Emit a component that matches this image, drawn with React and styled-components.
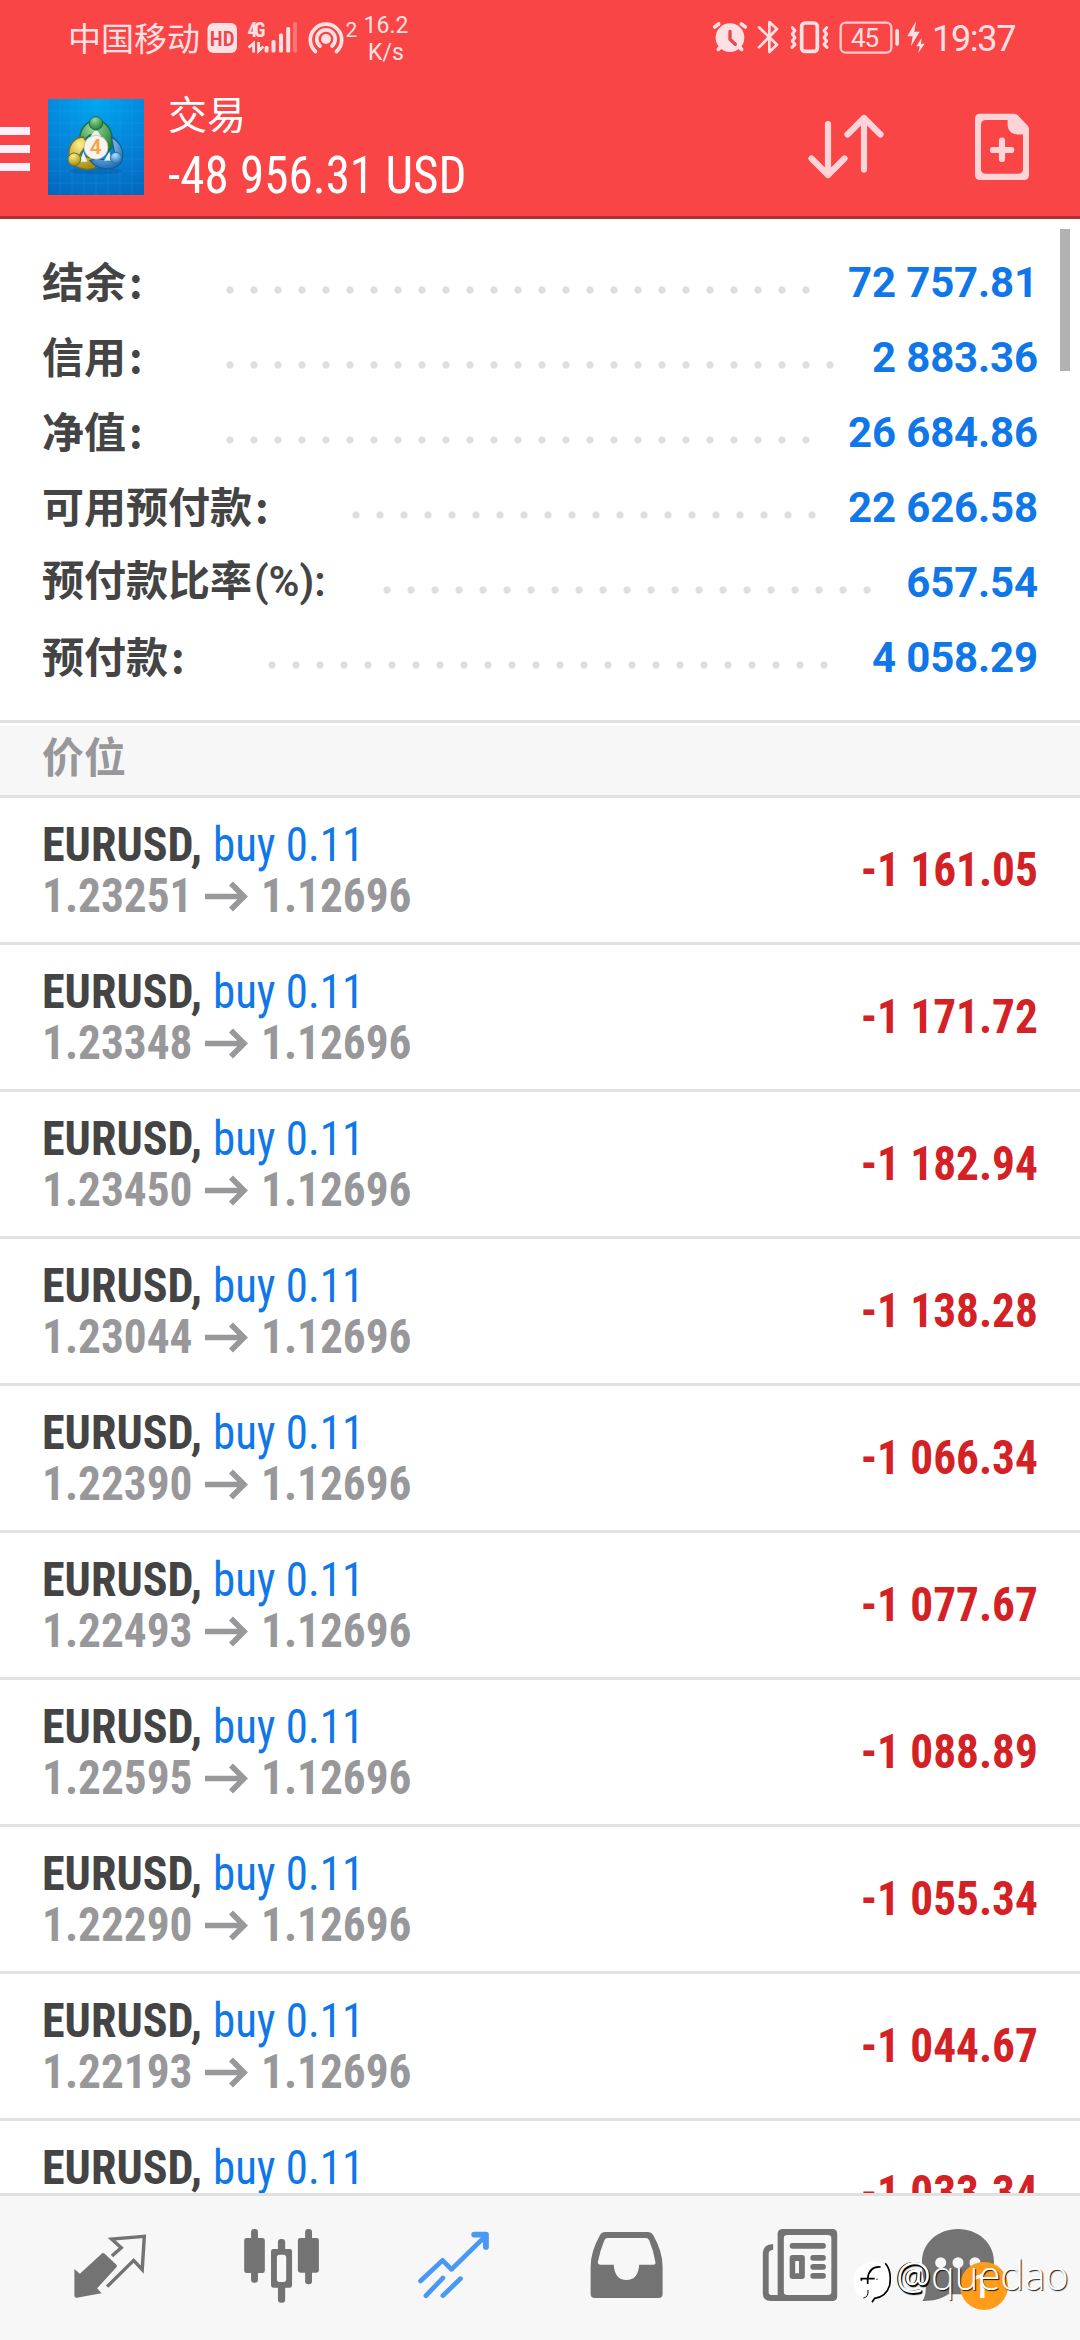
import React from "react";
import styled, { createGlobalStyle } from "styled-components";

const GlobalStyle = createGlobalStyle`
  * { box-sizing: border-box; }
  body { margin: 0; background: #fff; }
`;

const cjk = `"Noto Sans CJK SC", Roboto, sans-serif`;
const roboto = `Roboto, "Noto Sans CJK SC", sans-serif`;
const condensed = `"Roboto Condensed", Roboto, sans-serif`;

const Screen = styled.div`
  position: relative;
  width: 1080px;
  height: 2340px;
  overflow: hidden;
  display: flex;
  flex-direction: column;
  background: #fff;
  font-family: ${roboto};
`;

const Header = styled.header`
  flex: none;
  height: 219px;
  background: #fa4546;
  border-bottom: 3px solid #ae3033;
`;

const StatusBar = styled.div`
  display: flex;
  align-items: center;
  height: 78px;
  padding-left: 68px;
  color: #ffe1e3;
`;

const Carrier = styled.span`
  width: 136px;
  padding-bottom: 4px;
  font: 400 33px/40px ${cjk};
  white-space: nowrap;
`;

const Speed = styled.span`
  width: 52px;
  font-size: 23px;
  line-height: 27px;
  text-align: center;
`;

const Clock = styled.span`
  font-size: 36px;
  line-height: 40px;
  letter-spacing: -1.3px;
`;

const Glyph = styled.svg`
  flex: none;
  display: block;
  width: ${(p) => p.$w}px;
  height: ${(p) => p.$h}px;
  margin-left: ${(p) => p.$gap || 0}px;
  overflow: visible;
`;

const TitleBar = styled.div`
  display: flex;
  align-items: center;
  height: 138px;
`;

const MenuButton = styled.div`
  display: flex;
  flex-direction: column;
  gap: 10px;
  width: 30px;
  margin-top: 4px;
`;

const MenuLine = styled.span`
  height: 8px;
  background: #fbf0fb;
`;

const Titles = styled.div`
  display: flex;
  flex-direction: column;
  align-items: flex-start;
  gap: 8px;
  width: 662px;
  padding: 0 0 3px 24px;
  color: #fff;
`;

const Title = styled.span`
  font: 400 39px/52px ${cjk};
`;

const Narrow = styled.span`
  display: inline-block;
  transform: scaleX(${(p) => p.$x});
  transform-origin: ${(p) => p.$origin || "left"} center;
  white-space: nowrap;
`;

const Profit = styled(Narrow)`
  font: 400 51px/60px ${condensed};
`;

const Summary = styled.section`
  flex: none;
  height: 501px;
  padding: 24px 42px 0;
`;

const SummaryRow = styled.div`
  display: flex;
  align-items: center;
  height: 75px;
`;

const SummaryLabel = styled.span`
  flex: none;
  width: ${(p) => p.$w}px;
  padding-bottom: 2px;
  font: 700 42px/73px ${cjk};
  color: #444;
  white-space: nowrap;
`;

const Suffix = styled.span`
  margin-left: ${(p) => (p.$latin ? 2 : 3)}px;
  font-family: ${(p) => (p.$latin ? roboto : cjk)};
  font-weight: ${(p) => (p.$latin ? 600 : 700)};
`;

const Leader = styled.span`
  flex: none;
  width: ${(p) => p.$dots * 24}px;
  height: 75px;
  background: radial-gradient(circle at 12px 47px, #dedede 3.1px, transparent 4.1px) 0 0 / 24px 75px repeat-x;
`;

const SummaryValue = styled.span`
  margin-left: auto;
  padding-top: 4px;
  font-size: 42px;
  font-weight: 700;
  line-height: 60px;
  letter-spacing: -0.15px;
  color: #1077e8;
`;

const SectionHead = styled.div`
  flex: none;
  height: 78px;
  padding-left: 42px;
  border-top: 3px solid #e2e2e2;
  border-bottom: 3px solid #e2e2e2;
  background: linear-gradient(#fff 3px, #f7f7f8 3px);
  font: 700 42px/63px ${cjk};
  color: #98989b;
`;

const Orders = styled.main`
  flex: 1;
  min-height: 0;
  overflow: hidden;
`;

const Order = styled.div`
  display: flex;
  justify-content: space-between;
  height: 147px;
  padding: 21px 42px 0;
  border-bottom: 3px solid #e2e2e2;
  font: 700 48px/51px ${condensed};
  white-space: nowrap;
`;

const OrderInfo = styled.div`
  display: flex;
  flex-direction: column;
`;

const OrderLine = styled.div`
  display: flex;
  align-items: center;
  height: 51px;
`;

const Symbol = styled(Narrow)`
  width: 171px;
  color: #444;
`;

const Side = styled(Narrow)`
  font-weight: 400;
  color: #1077e8;
`;

const OpenPrice = styled(Narrow)`
  width: 163px;
  color: #98989a;
`;

const ClosePrice = styled(Narrow)`
  margin-left: 14px;
  color: #98989a;
`;

const OrderProfit = styled(Narrow)`
  height: 102px;
  line-height: 102px;
  color: #d32125;
`;

const NavBar = styled.nav`
  flex: none;
  display: flex;
  height: 147px;
  padding-left: 24px;
  border-top: 3px solid #e0e0e1;
  background: #f7f7f8;
`;

const NavItem = styled.div`
  flex: none;
  display: flex;
  width: 172px;
`;

const ScrollThumb = styled.div`
  position: absolute;
  top: 229px;
  left: 1060px;
  width: 10px;
  height: 142px;
  background: #b2b2b2;
`;

const Watermark = styled.div`
  position: absolute;
  top: 2254px;
  left: 850px;
  display: flex;
  align-items: center;
  height: 52px;
  color: #fff;
  font: 300 40px/42px "Open Sans", sans-serif;
  text-shadow: 1px 1px 1px rgba(0, 0, 0, 0.9);
`;

const WatermarkName = styled.span`
  padding-bottom: 10px;
`;

const WatermarkAt = styled(WatermarkName)`
  margin-left: 3px;
  font-weight: 400;
  font-size: 39px;
  text-shadow: 1px 1px 0 #000, -1px 0 0 #000, 1px 2px 1px #000;
`;

const summary = [
  { label: "结余", suffix: ":", w: 176, dots: 25, value: "72 757.81" },
  { label: "信用", suffix: ":", w: 176, dots: 26, value: "2 883.36" },
  { label: "净值", suffix: ":", w: 176, dots: 25, value: "26 684.86" },
  { label: "可用预付款", suffix: ":", w: 302, dots: 20, value: "22 626.58" },
  { label: "预付款比率", suffix: "(%):", w: 333, dots: 21, value: "657.54" },
  { label: "预付款", suffix: ":", w: 218, dots: 24, value: "4 058.29" },
];

const orders = [
  ["1.23251", "-1 161.05"],
  ["1.23348", "-1 171.72"],
  ["1.23450", "-1 182.94"],
  ["1.23044", "-1 138.28"],
  ["1.22390", "-1 066.34"],
  ["1.22493", "-1 077.67"],
  ["1.22595", "-1 088.89"],
  ["1.22290", "-1 055.34"],
  ["1.22193", "-1 044.67"],
  ["1.22089", "-1 033.34"],
];

const SignalIcons = () => (
  <Glyph $w={156} $h={78} viewBox="204 0 156 78" fill="#ffe1e3">
    <rect x="207.5" y="23" width="29.5" height="30" rx="6" />
    <text x="222.2" y="46" fontSize="21" fontWeight="600" textAnchor="middle" fill="#e8484c" fontFamily="Roboto Condensed, sans-serif">HD</text>
    <text x="247.5" y="36.5" fontSize="19.5" fontWeight="700" textLength="18" fontFamily="Roboto Condensed, sans-serif">4G</text>
    <g fill="none" stroke="#ffe1e3" strokeWidth="2.8">
      <path d="M248.5 47.5 L253.6 43.5 V52.5" />
      <path d="M258.6 42 V51 L263.4 46.5" />
    </g>
    <rect x="264.6" y="46" width="4" height="6.5" rx="1.5" />
    <rect x="271.5" y="40" width="4" height="12.5" rx="1.5" />
    <rect x="279" y="33.5" width="4" height="19" rx="1.5" />
    <rect x="286.2" y="27" width="4" height="25.5" rx="1.5" />
    <rect x="293" y="22" width="4" height="30.5" rx="1.5" opacity="0.3" />
    <circle cx="326" cy="39" r="5" />
    <g fill="none" stroke="#ffe1e3" strokeWidth="3.7" strokeLinecap="round">
      <path d="M320 46 A9.2 9.2 0 1 1 332 46" />
      <path d="M315.5 51.5 A15.7 15.7 0 1 1 336.5 51.5" />
    </g>
    <text x="345.5" y="37" fontSize="21" fontFamily="Roboto, sans-serif">2</text>
  </Glyph>
);

const SystemIcons = () => (
  <Glyph $w={223} $h={78} $gap={297} viewBox="708 0 223 78">
    <g transform="translate(690 10) scale(.33333)" fill="#ffe1e3" stroke="#ffe1e3">
      <circle cx="117" cy="83" r="43" stroke="none" />
      <g fill="none" strokeWidth="11" strokeLinecap="round">
        <path d="M71 51 L83 42 M163 51 L151 42 M82 118 L90 110 M152 118 L144 110" />
        <path d="M117 64 V88 L133 103" stroke="#e8484c" strokeWidth="10" />
        <path d="M204 52 L258 104 L235 126 V36 L258 57 L204 112" strokeWidth="8" strokeLinejoin="round" />
        <path d="M304 53 L312 62 L304 72 L312 83 L304 93 L312 103 L303 112" strokeWidth="9" strokeLinejoin="round" />
        <path d="M407 53 L399 62 L407 72 L399 83 L407 93 L399 103 L408 112" strokeWidth="9" strokeLinejoin="round" />
      </g>
      <rect x="332" y="39" width="47" height="85" rx="10" fill="none" strokeWidth="11" />
      <rect x="449" y="38" width="152" height="90" rx="15" fill="none" strokeWidth="7" stroke="#ffc9cb" />
      <rect x="613" y="57" width="11" height="50" rx="5" stroke="none" />
      <text x="522" y="110" fontSize="78" textLength="84" textAnchor="middle" fontFamily="Roboto, sans-serif" stroke="none">45</text>
      <path stroke="none" d="M675 34 L649 79 H665 L660 109 L686 65 H670 Z M692 83 L676 109 H686 L682 129 L701 101 H690 Z" />
    </g>
  </Glyph>
);

const AppLogo = () => (
  <Glyph $w={96} $h={96} $gap={18} viewBox="24 27 288 288">
    <defs>
      <radialGradient id="sky" cx="50%" cy="0%" r="110%">
        <stop offset="0" stopColor="#00a8f0" />
        <stop offset="0.55" stopColor="#0583d8" />
        <stop offset="1" stopColor="#0466bd" />
      </radialGradient>
      <radialGradient id="green" cx="40%" cy="25%" r="75%">
        <stop offset="0" stopColor="#9bd89a" /><stop offset="1" stopColor="#1f7f35" />
      </radialGradient>
      <radialGradient id="gold" cx="40%" cy="25%" r="75%">
        <stop offset="0" stopColor="#fff08a" /><stop offset="1" stopColor="#a98d12" />
      </radialGradient>
      <radialGradient id="blue" cx="40%" cy="25%" r="75%">
        <stop offset="0" stopColor="#b7e4ff" /><stop offset="1" stopColor="#1d70b8" />
      </radialGradient>
    </defs>
    <rect x="24" y="27" width="288" height="288" fill="url(#sky)" />
    <path d="M60 27V315M96 27V315M132 27V315M168 27V315M204 27V315M240 27V315M276 27V315M24 63H312M24 99H312M24 135H312M24 171H312M24 207H312M24 243H312M24 279H312" stroke="#3aa7ea" strokeWidth="1.5" opacity="0.45" />
    <ellipse cx="168" cy="243" rx="80" ry="10" fill="#04508f" opacity="0.35" />
    <path d="M120 160 C114 118 140 92 168 92 C198 92 224 120 216 172 L200 190 L180 135 L150 135 Z" fill="url(#green)" stroke="#1c6b46" strokeWidth="4" />
    <path d="M130 141 C98 142 82 172 88 205 C96 234 140 246 168 232 L156 205 L118 196 L142 160 Z" fill="url(#gold)" stroke="#70702a" strokeWidth="4" />
    <path d="M214 142 C240 152 254 184 246 212 C232 244 178 246 150 212 L172 205 L206 212 L224 190 Z" fill="url(#blue)" stroke="#1b5c96" strokeWidth="4" />
    <path d="M168 118 L184 138 H152 Z M130 185 L142 215 H120 Z M208 185 L216 212 H192 Z" fill="#eaf3e6" />
    <circle cx="168" cy="100" r="20" fill="url(#green)" stroke="#1c6b46" strokeWidth="3" />
    <circle cx="103" cy="208" r="19" fill="url(#gold)" stroke="#70702a" strokeWidth="3" />
    <circle cx="228" cy="204" r="17" fill="url(#blue)" stroke="#2a73b0" strokeWidth="3" />
    <circle cx="168" cy="172" r="36" fill="#f7f3ee" stroke="#b9b5a0" strokeWidth="2" />
    <text x="167" y="193" fontSize="62" fontWeight="600" textAnchor="middle" fill="#f3a546" fontFamily="Roboto, sans-serif">4</text>
  </Glyph>
);

const SortIcon = () => (
  <Glyph $w={84} $h={84} viewBox="806 105 84 84">
    <path d="M828 124 V175 M811.5 158.5 L828 175 L844.5 158.5 M864 169.5 V118 M847.5 134.5 L864 118 L880.5 134.5" fill="none" stroke="#ffd4d8" strokeWidth="6.2" strokeLinecap="round" strokeLinejoin="round" />
  </Glyph>
);

const NewOrderIcon = () => (
  <Glyph $w={60} $h={84} $gap={82} viewBox="972 105 60 84" fill="#ffd4d8">
    <path fillRule="evenodd" d="M980 113.7 H1014 Q1016.5 113.7 1018 115.5 L1027.5 125.5 Q1029 127.2 1029 129 V175 Q1029 180 1024 180 H980 Q975 180 975 175 V119 Q975 113.7 980 113.7 Z M986 120 Q981 120 981 125 V169 Q981 173.8 986 173.8 H1018 Q1023 173.8 1023 169 V134.6 H1018 Q1008 134 1007.6 125 V120 Z" />
    <path d="M993 150 H1011.2 M1002 140.5 V159" fill="none" stroke="#ffd4d8" strokeWidth="6.2" strokeLinecap="round" />
  </Glyph>
);

const PriceArrow = () => (
  <Glyph $w={42} $h={30} viewBox="0 0 42 30">
    <path d="M0 15.5 H39 M26 2.5 L39 15.5 L26 28.5" fill="none" stroke="#98989a" strokeWidth="5.6" />
  </Glyph>
);

/* Each tab drawing keeps the coordinates of the bar it belongs to. */
const TabIcon = ({ index, originX, children }) => (
  <Glyph $w={172} $h={144} viewBox={`${24 + index * 172} 2196 172 144`}>
    <g transform={`translate(${originX} 2100) scale(.34439 .33333)`} fill="#737373" stroke="none">
      {children}
    </g>
  </Glyph>
);

const Quotes = () => (
  <>
    <path d="M216 507 L232 521 L295 461 Q299 457 304 461 L338 494 Q341 498 338 502 L282 565 L295 580 L223 593 Q216 594 216 587 Z" />
    <path d="M325 468 L352 443 L324 417 L419 409 L413 509 L388 481 L311 560" fill="none" stroke="#737373" strokeWidth="10" />
  </>
);

const Candles = () => (
  <>
    <rect x="729" y="387" width="20" height="161" rx="9" />
    <rect x="709" y="414" width="60" height="105" rx="7" />
    <rect x="807" y="417" width="21" height="191" rx="9" />
    <path fillRule="evenodd" d="M794 447 H841 Q848 447 848 454 V556 Q848 563 841 563 H794 Q787 563 787 556 V454 Q787 447 794 447 Z" />
    <rect x="804" y="464" width="27" height="82" rx="8" fill="#f7f7f8" />
    <rect x="886" y="387" width="20" height="166" rx="9" />
    <rect x="865" y="414" width="61" height="104" rx="7" />
  </>
);

const Trade = () => (
  <g fill="none" stroke="#4a98f5" strokeWidth="14" strokeLinecap="round" strokeLinejoin="round">
    <path d="M1221 543 L1285 481 L1311 508 L1408 410" />
    <path d="M1377 404 H1411 V441" strokeWidth="17" />
    <path d="M1237 587 L1286 534 M1286 587 L1337 536" />
  </g>
);

const Inbox = () => (
  <path fillRule="evenodd" d="M190 396 H312 Q323 396 329 406 Q356 455 356 500 V582 Q356 594 344 594 H159 Q147 594 147 582 V500 Q147 455 174 406 Q179 396 190 396 Z M196 414 Q190 414 187 421 Q175 450 168 486 Q167 494 174 494 H214 Q217 540 251 540 Q285 540 288 494 H330 Q337 494 335 486 Q329 450 317 421 Q314 414 307 414 Z" />
);

const News = () => (
  <>
    <path fillRule="evenodd" d="M705 387 H849 Q863 387 863 401 V589 Q863 603 849 603 H670 Q647 603 647 580 V460 Q647 433 677 432 V449 Q664 450 664 462 V577 Q664 585 672 585 H690 V401 Q690 387 705 387 Z M718 405 Q708 405 708 415 V575 Q708 585 718 585 H836 Q846 585 846 575 V415 Q846 405 836 405 Z" />
    <rect x="725" y="429" width="105" height="17" rx="8" />
    <path fillRule="evenodd" d="M733 465 H761 Q769 465 769 473 V529 Q769 537 761 537 H733 Q725 537 725 529 V473 Q725 465 733 465 Z M741 483 V520 H752 V483 Z" />
    <rect x="785" y="465" width="45" height="17" rx="8" />
    <rect x="785" y="492" width="45" height="17" rx="8" />
    <rect x="785" y="519" width="45" height="17" rx="8" />
  </>
);

const ChatTab = () => (
  <Glyph $w={172} $h={144} viewBox="884 2196 172 144">
    <g transform="translate(840 2210) scale(.33333)">
      <path d="M354 57 C415 57 462 100 462 155 C462 212 414 253 354 253 H325 C305 266 280 274 247 273 C255 262 258 248 257 232 C249 208 246 182 246 155 C246 100 293 57 354 57 Z" fill="#737373" />
      <circle cx="302" cy="158" r="16.5" fill="#f7f7f8" />
      <circle cx="354" cy="158" r="16.5" fill="#f7f7f8" />
      <circle cx="405" cy="158" r="16.5" fill="#f7f7f8" />
      <circle cx="432" cy="228" r="72" fill="#ff9c1b" />
      <text x="424" y="264" fontSize="106" fontWeight="500" textAnchor="middle" fill="#fff" fontFamily="Roboto, sans-serif">1</text>
    </g>
  </Glyph>
);

const WatermarkLogo = () => (
  <Glyph $w={43} $h={52} viewBox="30 132 129 156">
    <circle cx="98" cy="213" r="58" fill="#fff" />
    <g fill="none" stroke="#000" strokeWidth="5">
      <path d="M122 171 Q88 168 83 205 V222 M64 212 V206 H104" />
      <path d="M84 240 Q86 262 70 264" strokeWidth="3" />
      <path d="M136 160 Q156 184 149 225 Q140 260 104 265 L96 277" />
    </g>
    <circle cx="111" cy="208" r="2.5" fill="#555" />
  </Glyph>
);

export default function App() {
  return (
    <Screen>
      <GlobalStyle />
      <Header>
        <StatusBar>
          <Carrier>中国移动</Carrier>
          <SignalIcons />
          <Speed>16.2 K/s</Speed>
          <SystemIcons />
          <Clock>19:37</Clock>
        </StatusBar>
        <TitleBar>
          <MenuButton>
            <MenuLine />
            <MenuLine />
            <MenuLine />
          </MenuButton>
          <AppLogo />
          <Titles>
            <Title>交易</Title>
            <Profit $x={0.963}>-48 956.31 USD</Profit>
          </Titles>
          <SortIcon />
          <NewOrderIcon />
        </TitleBar>
      </Header>

      <Summary>
        {summary.map((item) => (
          <SummaryRow key={item.label}>
            <SummaryLabel $w={item.w}>
              {item.label}
              <Suffix $latin={item.suffix.length > 1}>{item.suffix}</Suffix>
            </SummaryLabel>
            <Leader $dots={item.dots} />
            <SummaryValue>{item.value}</SummaryValue>
          </SummaryRow>
        ))}
      </Summary>

      <SectionHead>价位</SectionHead>

      <Orders>
        {orders.map(([open, profit]) => (
          <Order key={open}>
            <OrderInfo>
              <OrderLine>
                <Symbol $x={0.96}>EURUSD,</Symbol>
                <Side $x={0.935}>buy 0.11</Side>
              </OrderLine>
              <OrderLine>
                <OpenPrice $x={0.943}>{open}</OpenPrice>
                <PriceArrow />
                <ClosePrice $x={0.943}>1.12696</ClosePrice>
              </OrderLine>
            </OrderInfo>
            <OrderProfit $x={0.943} $origin="right">{profit}</OrderProfit>
          </Order>
        ))}
      </Orders>

      <NavBar>
        <NavItem><TabIcon index={0} originX={0}><Quotes /></TabIcon></NavItem>
        <NavItem><TabIcon index={1} originX={0}><Candles /></TabIcon></NavItem>
        <NavItem><TabIcon index={2} originX={0}><Trade /></TabIcon></NavItem>
        <NavItem><TabIcon index={3} originX={540}><Inbox /></TabIcon></NavItem>
        <NavItem><TabIcon index={4} originX={540}><News /></TabIcon></NavItem>
        <NavItem><ChatTab /></NavItem>
      </NavBar>

      <ScrollThumb />
      <Watermark>
        <WatermarkLogo />
        <WatermarkAt>@</WatermarkAt>
        <WatermarkName>quedao</WatermarkName>
      </Watermark>
    </Screen>
  );
}
